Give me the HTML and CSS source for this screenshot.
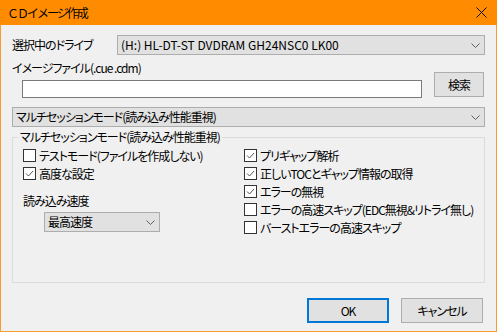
FILE: index.html
```html
<!DOCTYPE html>
<html lang="ja">
<head>
    <meta charset="UTF-8">
    <title>ＣＤイメージ作成</title>
    <link rel="stylesheet" href="styles.css">
</head>
<body>
    <div class="window">
        <div class="titlebar">
            <span class="title">ＣＤイメージ作成</span>
            <svg class="close" width="11" height="11" viewBox="0 0 11 11"><path d="M0.5 0.5 L10.5 10.5 M10.5 0.5 L0.5 10.5"/></svg>
        </div>

        <div class="content">
            <div class="drive-row">
                <span class="drive-label">選択中のドライブ</span>
                <div class="combo drive-combo">
                    <span class="combo-text latin">(H:) HL-DT-ST DVDRAM GH24NSC0 LK00</span>
                    <svg class="chevron" width="9" height="5" viewBox="0 0 9 5"><polyline points="0.5,0.5 4.5,4.5 8.5,0.5"/></svg>
                </div>
            </div>

            <div class="file-row">
                <div class="file-col">
                    <div class="file-label">イメージファイル(.cue .cdm)</div>
                    <div class="textbox"></div>
                </div>
                <button class="btn search-btn">検索</button>
            </div>

            <div class="combo mode-combo">
                <span class="combo-text">マルチセッションモード(読み込み性能重視)</span>
                <svg class="chevron" width="9" height="5" viewBox="0 0 9 5"><polyline points="0.5,0.5 4.5,4.5 8.5,0.5"/></svg>
            </div>

            <fieldset class="group">
                <legend>マルチセッションモード(読み込み性能重視)</legend>
                <div class="group-body">
                    <div class="col-left">
                        <div class="check-row"><span class="box"></span>テストモード(ファイルを作成しない)</div>
                        <div class="check-row"><span class="box checked"><svg width="11" height="11" viewBox="0 0 11 11"><polyline points="2,5.5 4.5,8 9,3"/></svg></span>高度な設定</div>
                        <div class="speed-label">読み込み速度</div>
                        <div class="combo speed-combo">
                            <span class="combo-text">最高速度</span>
                            <svg class="chevron" width="9" height="5" viewBox="0 0 9 5"><polyline points="0.5,0.5 4.5,4.5 8.5,0.5"/></svg>
                        </div>
                    </div>
                    <div class="col-right">
                        <div class="check-row"><span class="box checked"><svg width="11" height="11" viewBox="0 0 11 11"><polyline points="2,5.5 4.5,8 9,3"/></svg></span>プリギャップ解析</div>
                        <div class="check-row"><span class="box checked"><svg width="11" height="11" viewBox="0 0 11 11"><polyline points="2,5.5 4.5,8 9,3"/></svg></span>正しいTOCとギャップ情報の取得</div>
                        <div class="check-row"><span class="box checked"><svg width="11" height="11" viewBox="0 0 11 11"><polyline points="2,5.5 4.5,8 9,3"/></svg></span>エラーの無視</div>
                        <div class="check-row"><span class="box"></span>エラーの高速スキップ(EDC無視&amp;リトライ無し)</div>
                        <div class="check-row"><span class="box"></span>バーストエラーの高速スキップ</div>
                    </div>
                </div>
            </fieldset>

            <div class="actions">
                <button class="btn ok-btn">OK</button>
                <button class="btn cancel-btn">キャンセル</button>
            </div>
        </div>
    </div>
</body>
</html>
```

FILE: styles.css
```css
body {
    margin: 0;
    font-family: "Noto Sans CJK JP", "Noto Sans", sans-serif;
    font-size: 12px;
    font-feature-settings: "palt";
    letter-spacing: -1px;
    color: #000;
    background-color: #f0f0f0;
}
.window {
    width: 497px;
    height: 332px;
    box-sizing: border-box;
    border: 1px solid #f99c2f;
    border-top: none;
    background-color: #f0f0f0;
}
.titlebar {
    height: 25px;
    margin: 0 -1px;
    background-color: #ff8c00;
    display: flex;
    align-items: center;
    justify-content: space-between;
    padding: 0 10px 0 7px;
}
.title {
    line-height: 14px;
    font-feature-settings: normal;
    letter-spacing: -2px;
}
.close path {
    stroke: #000;
    stroke-width: 1;
    fill: none;
}
.content {
    padding: 10px 11px 0 11px;
}
.drive-row {
    display: flex;
    align-items: center;
    height: 20px;
}
.drive-label {
    width: 105px;
    line-height: 14px;
}
.combo {
    height: 20px;
    box-sizing: border-box;
    border: 1px solid #adadad;
    background-color: #e1e1e1;
    display: flex;
    align-items: center;
    justify-content: space-between;
    padding: 0 4px 0 3px;
}
.drive-combo {
    flex: 1;
}
.combo-text {
    line-height: 14px;
    white-space: nowrap;
}
.latin {
    letter-spacing: 0;
}
.chevron polyline {
    stroke: #606060;
    stroke-width: 1;
    fill: none;
}
.file-row {
    display: flex;
    align-items: flex-end;
    margin-top: 6px;
}
.file-col {
    flex: 1;
}
.file-label {
    line-height: 14px;
    margin-bottom: 5px;
}
.textbox {
    height: 18px;
    box-sizing: border-box;
    margin-left: 10px;
    border: 1px solid #7a7a7a;
    background-color: #fff;
}
.btn {
    font: inherit;
    letter-spacing: inherit;
    color: #000;
    height: 25px;
    box-sizing: border-box;
    border: 1px solid #adadad;
    background-color: #e1e1e1;
    padding: 0;
    line-height: 14px;
}
.search-btn {
    width: 50px;
    margin: 0 1px 1px 12px;
}
.mode-combo {
    margin-top: 9px;
}
.group {
    margin: 3px 0 0;
    padding: 0;
    height: 153px;
    box-sizing: border-box;
    border: 1px solid #dcdcdc;
    min-width: 0;
}
.group legend {
    margin-left: 5px;
    padding: 0 2px;
    line-height: 14px;
}
.group-body {
    display: grid;
    grid-template-columns: 221px 1fr;
    padding: 2px 10px 0;
}
.check-row {
    display: flex;
    align-items: center;
    height: 18px;
    white-space: nowrap;
}
.box {
    width: 13px;
    height: 13px;
    box-sizing: border-box;
    border: 1px solid #333;
    background-color: #fff;
    margin-right: 3px;
    flex-shrink: 0;
}
.box svg {
    display: block;
}
.box polyline {
    stroke: #555;
    stroke-width: 1;
    fill: none;
}
.speed-label {
    line-height: 14px;
    margin-top: 12px;
}
.speed-combo {
    width: 116px;
    margin: 4px 0 0 21px;
}
.actions {
    display: flex;
    justify-content: flex-end;
    gap: 12px;
    margin: 15px 2px 0 0;
}
.ok-btn,
.cancel-btn {
    width: 82px;
}
.ok-btn {
    border: 2px solid #0078d7;
}
```
